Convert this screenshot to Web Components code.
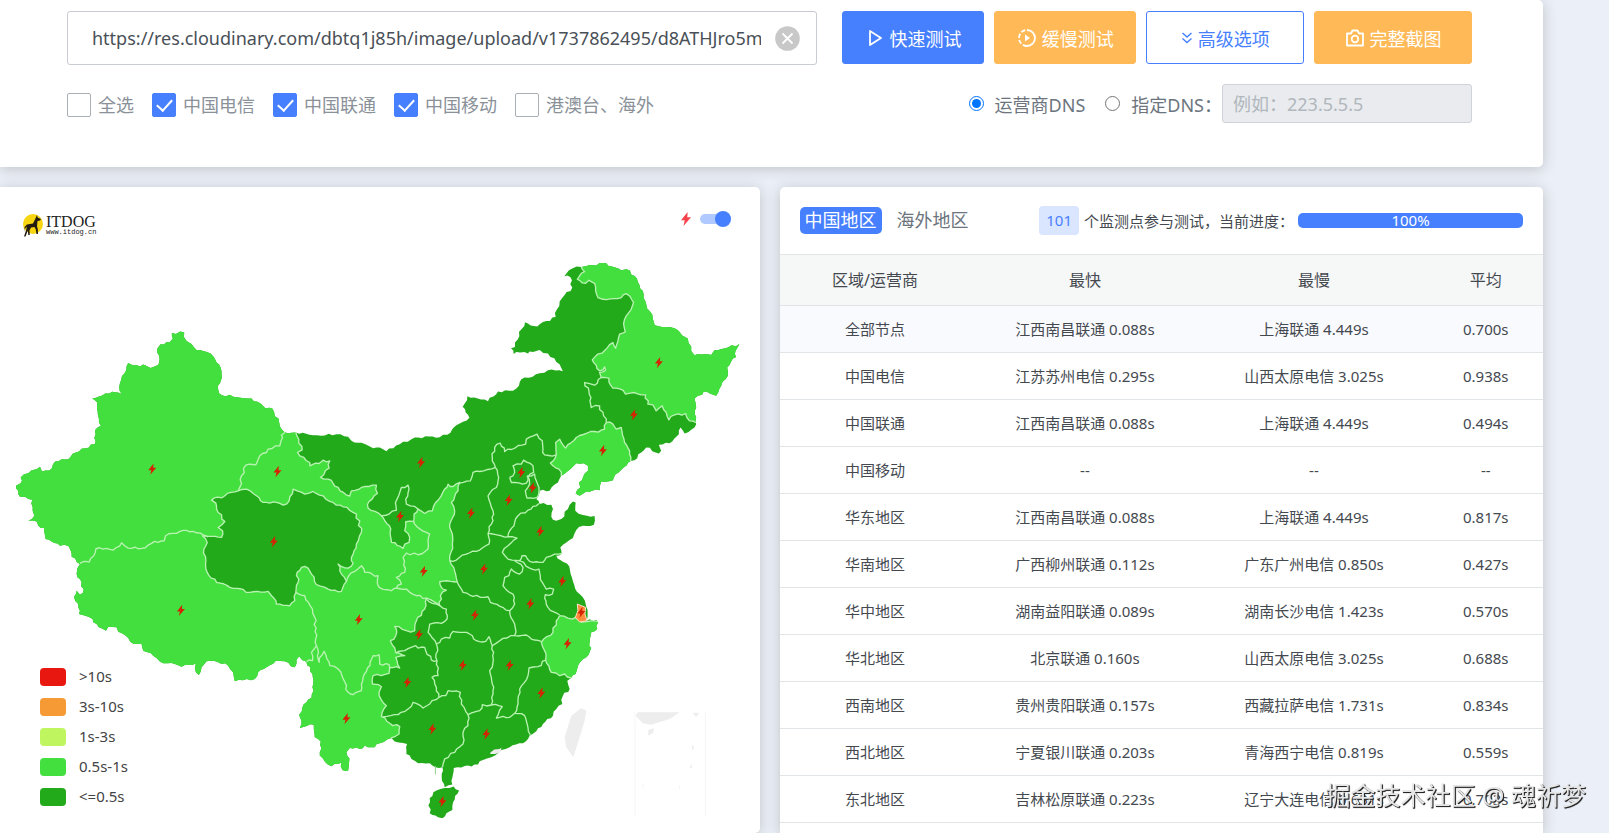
<!DOCTYPE html>
<html lang="zh-CN">
<head>
<meta charset="utf-8">
<title>ITDOG 网站测速</title>
<style>
html,body{margin:0;height:100%}
body{background:#ebeff7;color:#444950;overflow:hidden;font-family:"Noto Sans","Noto Sans CJK SC",sans-serif;font-size:15px}
</style>
</head>
<body>
<speed-page>
  <speed-form slot="form"></speed-form>
  <map-panel slot="map"></map-panel>
  <result-panel slot="results"></result-panel>
  <site-credit slot="credit">掘金技术社区 @ 魂祈梦</site-credit>
</speed-page>
<script>
function define(name, html, ready) {
  customElements.define(name, class extends HTMLElement {
    constructor() {
      super();
      this.attachShadow({mode: 'open'}).innerHTML = '<style>*{box-sizing:border-box}</style>' + html;
    }
    connectedCallback() { if (ready) ready.call(this, this.shadowRoot); }
  });
}

define('speed-page', `
<style>
:host{display:block;height:100vh;overflow:hidden}
main{width:calc(100% - 66px);min-height:100%;display:grid;grid-template-rows:auto 1fr;gap:20px}
.row{display:grid;grid-template-columns:calc(50% - 12px) minmax(0,1fr);gap:20px}
</style>
<main><slot name="form"></slot><div class="row"><slot name="map"></slot><slot name="results"></slot></div></main>
<slot name="credit"></slot>`);

define('surface-card', `
<style>:host{display:block;background:#fff;border-radius:0 5px 5px 0;box-shadow:0 2px 14px rgba(50,55,50,.24)}</style><slot></slot>`);

define('action-button', `
<style>
:host{display:block;flex:9 1 0}
:host([wide]){flex-grow:10}
button{width:100%;height:53px;border:1px solid #4680ff;border-radius:3px;background:#4680ff;color:#fff;font:inherit;font-size:18px;display:flex;align-items:center;justify-content:center;gap:5px;padding:0;white-space:nowrap}
:host([kind=warn]) button{background:#ffba57;border-color:#ffba57}
:host([kind=line]) button{background:#fff;color:#4680ff}
::slotted(svg){width:20px;height:20px;fill:none;stroke:currentColor;stroke-width:1.8}
:host([kind=line]) ::slotted(svg){width:12px}
</style>
<button type="button"><slot name="icon"></slot><slot></slot></button>`);

define('isp-option', `
<style>
:host{display:block}
label{display:flex;align-items:center;gap:7px;font-size:18px;line-height:24px;color:#8a9199;white-space:nowrap}
input{appearance:none;margin:0;width:24px;height:24px;border:1px solid #a9b0b6;border-radius:2px;background:#fff;display:grid;place-items:center}
input:checked{background:#4680ff;border-color:#4680ff}
input:checked::after{content:"";width:7px;height:13px;border:solid #fff;border-width:0 2px 2px 0;transform:translateY(-2px) rotate(42deg)}
</style>
<label><input type="checkbox"><span><slot></slot></span></label>`, function (root) {
  root.querySelector('input').checked = this.hasAttribute('checked');
});

define('speed-form', `
<style>
:host{display:block}
.grid{display:grid;grid-template-columns:25fr 21fr;column-gap:25px;padding:11px 71px 44px 67px}
.url{height:54px;border:1px solid #c8ccd0;border-radius:3px;display:flex;align-items:center;padding:0 16px 0 24px;gap:14px}
.url input{flex:1;min-width:0;border:0;outline:0;padding:0;background:none;font:inherit;font-size:18px;color:#495057}
.url button{border:0;padding:0;background:none;width:25px;height:25px}
.url svg{display:block}
.opts{display:flex;gap:18px;margin-top:28px}
.actions{display:flex;gap:10px}
.dns{display:flex;justify-content:flex-end;align-items:center;margin-top:20px;font-size:18px;color:#6c757d;white-space:nowrap}
.dns label{display:flex;align-items:center;gap:11px;margin-right:20px}
.dns label+label{margin-right:0}
.dns input[type=radio]{width:15px;height:15px;margin:0}
.dns input[type=text]{width:250px;height:39px;border:1px solid #ced4da;border-radius:3px;background:#e9ebee;font:inherit;font-size:18px;padding:0 10px}
.dns input::placeholder{color:#b0b7bd;opacity:1}
</style>
<surface-card><form class="grid">
<div>
  <div class="url"><input type="text" aria-label="网址" value="https://res.cloudinary.com/dbtq1j85h/image/upload/v1737862495/d8ATHJro5m"><button type="button" aria-label="清除"><svg viewBox="0 0 25 25"><circle cx="12.5" cy="12.5" r="12.3" fill="#c8c8c8"/><path d="M7.5 7.5l10 10M17.5 7.5l-10 10" stroke="#fff" stroke-width="1.8"/></svg></button></div>
  <div class="opts"><isp-option>全选</isp-option><isp-option checked>中国电信</isp-option><isp-option checked>中国联通</isp-option><isp-option checked>中国移动</isp-option><isp-option>港澳台、海外</isp-option></div>
</div>
<div>
  <div class="actions">
    <action-button><svg slot="icon" viewBox="0 0 20 20"><path d="M5 3v14l11-7z" stroke-linejoin="round"/></svg>快速测试</action-button>
    <action-button kind="warn"><svg slot="icon" viewBox="0 0 20 20"><path d="M10 2a8 8 0 0 1 0 16" /><path d="M10 18a8 8 0 0 1 0-16" stroke-dasharray="4.3 2"/><path d="M8 6.5v7l5-3.5z" fill="currentColor" stroke="none"/></svg>缓慢测试</action-button>
    <action-button kind="line" wide><svg slot="icon" viewBox="4 0 12 20" style="stroke-width:1.4"><path d="M5.5 5l4.500 4 4.500-4M5.500 10.500l4.500 4 4.500-4"/></svg>高级选项</action-button>
    <action-button kind="warn" wide><svg slot="icon" viewBox="0 0 20 20"><path d="M2 5.500h4l1.500-3h5l1.500 3h4v12H2z" stroke-linejoin="round"/><circle cx="10" cy="11" r="3.300"/></svg>完整截图</action-button>
  </div>
  <div class="dns"><label><input type="radio" name="dns" checked>运营商DNS</label><label><input type="radio" name="dns">指定DNS：</label><input type="text" aria-label="指定DNS地址" placeholder="例如：223.5.5.5" disabled></div>
</div>
</form></surface-card>`);

define('itdog-logo', `
<style>
:host{display:flex;align-items:center;gap:2px;color:#222}
svg{width:22px;height:24px}
b{display:block;font:16px/14px "Liberation Serif",serif}
small{display:block;font:7px/7px "Liberation Mono",monospace}
</style>
<svg viewBox="0 0 22 24"><circle cx="11" cy="11" r="10" fill="#f7d510"/><path fill="#231b10" d="M15 2l.6 2.600 3.400 1.400-.8 1.500-2.700.6-.5 5.400.8 2.500.2 5h-1.500l-.7-4.500-1.300-2.500-3.500.5-1.500 3 .3 4.500H6.300l-.5-4.500-2.300 6H2l2.300-7 .5-3-2 2.500-.5 3 .3-5L5 11.500l6-1 2-4z"/></svg>
<span><b>ITDOG</b><small>www.itdog.cn</small></span>`);

define('legend-item', `
<style>
:host{display:flex;align-items:center;gap:13px;height:18px;line-height:16px;color:#444}
i{width:26px;height:18px;border-radius:4px;background:var(--swatch)}
span{height:18px}
</style><i></i><span><slot></slot></span>`);

/* Map geometry, in thirds of a pixel at the design width. */
const LAND = '240,1690 215,1668 208,1640 205,1636 180,1635 155,1622 137,1615 133,1582 115,1575 110,1562 85,1560 103,1545 98,1530 97,1497 75,1488 60,1488 55,1470 48,1455 62,1447 62,1430 72,1420 95,1408 110,1405 120,1398 126,1412 148,1409 166,1382 205,1375 218,1359 284,1330 287,1302 285,1288 303,1275 293,1232 292,1205 277,1193 337,1173 366,1180 358,1158 385,1086 400,1094 440,1095 452,1101 475,1092 478,1084 473,1042 482,1030 510,1023 519,1013 516,996 553,995 552,1008 560,1020 575,1029 590,1047 610,1050 632,1058 642,1068 650,1085 662,1100 665,1120 663,1140 654,1155 658,1178 700,1188 755,1193 797,1222 818,1224 838,1264 855,1295 865,1297 888,1295 940,1303 1010,1300 1045,1308 1055,1320 1085,1326 1120,1342 1140,1340 1160,1351 1200,1330 1245,1310 1320,1309 1353,1295 1370,1273 1409,1251 1389,1218 1403,1186 1465,1201 1495,1172 1540,1170 1558,1155 1565,1135 1620,1117 1645,1108 1690,1111 1680,1090 1645,1058 1620,1047 1590,1052 1585,1058 1550,1053 1542,1059 1534,1042 1546,1038 1546,1025 1576,964 1613,977 1640,960 1668,948 1672,925 1695,882 1718,860 1712,828 1694,826 1718,803 1745,798 1770,792 1820,787 1865,808 1880,805 1905,825 1920,853 1932,880 1940,910 1950,930 1960,955 1965,972 2000,978 2025,982 2065,1013 2075,1050 2085,1063 2135,1062 2145,1048 2185,1040 2220,1029 2208,1050 2210,1068 2195,1082 2183,1100 2185,1125 2165,1155 2150,1185 2112,1173 2108,1182 2085,1193 2090,1220 2088,1260 2085,1280 2055,1298 2043,1280 2038,1300 2010,1327 1978,1332 1985,1350 1978,1358 1940,1340 1925,1355 1905,1378 1895,1380 1865,1407 1848,1420 1840,1438 1805,1442 1800,1468 1760,1472 1740,1485 1728,1478 1742,1460 1738,1445 1765,1410 1765,1395 1752,1387 1730,1387 1712,1405 1685,1425 1675,1445 1650,1470 1620,1470 1610,1495 1620,1510 1655,1512 1660,1525 1655,1548 1670,1560 1685,1555 1705,1525 1720,1502 1728,1505 1727,1530 1750,1543 1785,1546 1783,1572 1750,1575 1730,1588 1720,1612 1700,1625 1682,1640 1686,1658 1670,1665 1682,1678 1702,1688 1717,1730 1727,1765 1740,1780 1756,1800 1760,1818 1761,1860 1790,1857 1793,1885 1775,1895 1770,1925 1775,1942 1760,1970 1735,1995 1728,2020 1715,2032 1703,2040 1710,2065 1690,2085 1688,2110 1670,2125 1660,2145 1630,2170 1610,2192 1590,2205 1570,2228 1530,2240 1505,2248 1475,2270 1450,2278 1435,2292 1395,2296 1362,2302 1360,2320 1358,2352 1335,2360 1326,2330 1328,2300 1307,2300 1290,2288 1255,2288 1235,2275 1220,2260 1222,2230 1185,2223 1175,2212 1140,2228 1125,2240 1095,2235 1080,2245 1050,2242 1040,2255 1048,2285 1045,2310 1028,2308 1025,2285 995,2297 960,2265 963,2223 945,2210 942,2172 900,2182 905,2170 898,2142 908,2120 935,2092 940,2050 938,2020 920,1983 898,1967 885,2000 855,1982 828,1980 800,2000 775,2015 765,2035 705,2042 700,2015 685,1995 655,1985 620,1982 605,2000 597,2023 588,2015 588,1988 545,1998 515,1987 490,1988 460,1965 430,1950 425,1930 402,1930 385,1912 355,1893 350,1880 325,1878 318,1890 280,1865 270,1850 237,1840 235,1810 222,1788 230,1770 240,1782 250,1775 245,1745 230,1720 232,1703 240,1690';
const HAINAN = '1290,2392 1310,2370 1335,2362 1362,2358 1378,2370 1360,2405 1358,2428 1340,2438 1328,2453 1315,2450 1290,2438 1290,2392';
const LIGHT = [
  '888,1240 888,1296 907,1347 893,1355 930,1385 930,1395 958,1388 970,1378 990,1380 988,1402 962,1430 985,1435 1015,1460 1050,1486 1055,1470 1085,1460 1130,1453 1133,1478 1108,1502 1105,1522 1145,1545 1255,1525 1275,1538 1298,1530 1302,1515 1335,1465 1345,1450 1360,1457 1380,1445 1375,1470 1355,1505 1365,1530 1350,1570 1358,1630 1350,1678 1362,1700 1373,1744 1320,1743 1325,1760 1340,1768 1322,1785 1320,1815 1280,1792 1275,1825 1250,1860 1245,1890 1220,1890 1185,1877 1188,1905 1172,1920 1188,1955 1215,1965 1188,1970 1200,2002 1170,2000 1168,2018 1120,2025 1118,2050 1145,2058 1138,2085 1160,2115 1145,2148 1170,2168 1200,2178 1198,2200 1175,2212 1150,2380 0,2380 0,900 888,900 888,1240',
  '1735,750 1745,798 1755,812 1733,835 1758,847 1768,838 1785,847 1795,890 1810,895 1865,890 1880,878 1902,905 1875,955 1877,993 1860,1000 1848,1042 1840,1025 1778,1077 1800,1110 1815,1098 1818,1108 1800,1115 1805,1130 1828,1132 1840,1162 1870,1168 1878,1180 1905,1175 1938,1182 1945,1210 1960,1212 1970,1230 1988,1215 2008,1257 2025,1242 2058,1238 2070,1260 2090,1265 2290,1265 2290,750 1735,750',
  '1820,1265 1840,1270 1850,1285 1865,1280 1875,1325 1890,1350 1893,1380 1900,1491 1700,1491 1685,1425 1678,1405 1652,1387 1670,1360 1668,1325 1680,1315 1698,1342 1730,1310 1785,1292 1815,1285 1820,1265',
  '1680,1845 1705,1852 1718,1855 1728,1850 1745,1864 1900,1850 1900,2032 1715,2032 1695,2020 1680,2025 1655,2015 1638,1978 1635,1950 1625,1925 1660,1895 1670,1860 1680,1845'
];
const DARK = [
  '625,1607 665,1610 668,1590 655,1580 675,1562 650,1525 648,1507 635,1498 715,1470 740,1465 770,1485 790,1505 830,1505 850,1513 868,1500 880,1465 915,1480 940,1472 970,1485 990,1502 1030,1518 1070,1540 1085,1595 1070,1630 1055,1670 1060,1688 1045,1702 1015,1690 1025,1720 1040,1742 1025,1772 985,1765 950,1752 935,1720 925,1702 905,1700 892,1715 895,1745 888,1775 885,1800 870,1815 830,1810 815,1785 805,1772 750,1775 700,1763 650,1745 622,1715 618,1680 612,1645 622,1625 608,1605 625,1607',
  '1145,1545 1190,1528 1192,1495 1205,1460 1225,1453 1228,1465 1218,1495 1220,1510 1255,1525 1243,1540 1242,1562 1218,1563 1215,1590 1230,1610 1228,1625 1215,1630 1210,1643 1175,1625 1173,1585 1155,1560 1145,1545'
];
const LINES = [
  '240,1688 268,1684 288,1644 340,1648 365,1626 385,1642 425,1643 455,1628 493,1620 497,1605 540,1592 580,1592 610,1602 625,1608',
  '715,1470 738,1393 768,1392 775,1375 805,1345 840,1335 848,1310 845,1303 857,1290',
  '888,1775 915,1785 938,1825 945,1850 950,1935 935,1955 938,1980 920,1983',
  '950,1935 958,1985 973,1952 990,1995 1015,2005 1045,2075 1060,2082 1085,2070 1090,2030 1120,1965 1138,1962 1140,1990 1168,1992 1170,2005',
  '1040,1742 1045,1728 1065,1712 1085,1695 1095,1715 1135,1725 1138,1760 1175,1770 1190,1762 1220,1765 1250,1785 1280,1792',
  '1190,1762 1205,1750 1190,1730 1215,1715 1210,1670 1220,1657 1255,1662 1285,1645 1290,1600 1245,1570 1240,1560',
  '1805,1130 1785,1153 1770,1148 1755,1145 1768,1170 1775,1220 1800,1215 1812,1245 1820,1265',
  '1670,1362 1635,1362 1630,1345 1628,1320 1612,1300 1580,1315 1578,1330 1515,1352 1502,1327 1485,1340 1478,1370 1487,1400 1440,1412 1420,1415 1412,1440 1380,1447',
  '1487,1400 1497,1430 1490,1460 1465,1485 1480,1530 1475,1570 1465,1598 1468,1630 1440,1648 1400,1660 1370,1678 1350,1680',
  '1465,1598 1525,1608 1530,1590 1545,1565 1555,1545 1585,1528 1610,1515 1618,1508',
  '1525,1608 1552,1612 1525,1635 1508,1655 1525,1675 1560,1680 1567,1665 1578,1665 1590,1682 1630,1685 1640,1670 1665,1660 1688,1658',
  '1560,1680 1590,1702 1618,1705 1628,1745 1640,1765 1662,1765 1658,1780 1637,1782 1645,1820 1680,1843',
  '1545,1680 1570,1700 1560,1720 1535,1705 1528,1725 1515,1730 1510,1755 1540,1780 1545,1810 1530,1830',
  '1373,1745 1390,1775 1420,1787 1465,1788 1472,1805 1530,1830 1545,1870 1545,1905 1580,1903 1595,1915 1625,1922',
  '1638,1978 1615,1998 1588,2002 1585,2025 1560,2065 1555,2110 1545,2138 1575,2145 1585,2180 1592,2215',
  '1545,2138 1530,2150 1490,2152 1508,2118 1475,2113 1448,2112 1440,2130 1405,2142 1385,2110 1382,2075 1345,2070 1338,2085 1318,2090',
  '1405,2142 1405,2175 1390,2195 1390,2230 1365,2255 1335,2275 1328,2300',
  '1318,2090 1290,2110 1270,2122 1240,2105 1225,2125 1195,2142 1150,2148',
  '1318,2090 1310,2060 1297,2030 1315,2025 1312,1980 1310,1930 1325,1915 1350,1912 1360,1892 1410,1900 1430,1920 1458,1922 1468,1908 1478,1935 1500,1920 1545,1905',
  '1280,1795 1310,1810 1340,1825 1342,1855 1325,1868 1290,1870 1285,1895 1310,1930',
  '1478,1935 1480,1985 1470,2010 1478,2050 1480,2080 1475,2113',
  '1188,1958 1215,1950 1248,1935 1255,1942 1275,1940 1295,1978 1312,1980',
  '1530,1430 1545,1415 1540,1395 1565,1390 1572,1378 1600,1395 1602,1415 1585,1430 1580,1447 1535,1445 1530,1430',
  '1582,1425 1605,1420 1610,1440 1618,1460 1612,1490 1582,1492 1577,1470 1590,1450 1582,1425'
];
const BOLTS = '457,1405 833,1412 822,1623 1264,1385 1201,1547 1414,1537 1527,1498 1565,1415 1599,1461 1622,1592 1453,1705 1592,1809 1426,1843 1272,1712 1077,1857 1258,1902 1978,1085 1903,1242 1810,1349 543,1829 1040,2154 1223,2045 1389,1994 1530,1994 1625,2077 1704,1929 1745,1835 1688,1742 1298,2185 1460,2200 1328,2403';

/* Splits long segments and nudges each new vertex, so borders read as natural outlines. */
function outline(list) {
  const p = list.split(' ').map(s => s.split(',').map(Number));
  const out = [p[0]];
  for (let i = 1; i < p.length; i++) {
    const [ax, ay] = p[i - 1], [bx, by] = p[i];
    const len = Math.hypot(bx - ax, by - ay), n = Math.max(1, Math.min(9, Math.round(len / 11)));
    for (let k = 1; k < n; k++) {
      const x = ax + (bx - ax) * k / n, y = ay + (by - ay) * k / n;
      const h = Math.sin(x * 12.9898 + y * 78.233) * 43758.5453;
      const j = (h - Math.floor(h) - .5) * 8;
      out.push([x - (by - ay) / len * j, y + (bx - ax) / len * j]);
    }
    out.push(p[i]);
  }
  return 'M' + out.map(a => a.map(v => Math.round(v)).join(' ')).join('L');
}
const BOLT = 'M4-17L-12 3H-3L-6 17 12-4H3z';

define('china-map', `
<style>
:host{display:block}
svg{display:block;width:100%;height:auto}
.lines path{fill:none}
.edge{stroke:#b9f3b2;stroke-width:4;stroke-linejoin:round}
</style>
<svg viewBox="0 558 2280 1938" role="img" aria-label="中国各省测速地图">
<defs><clipPath id="land"><path/></clipPath></defs>
<g clip-path="url(#land)" class="edge">
<rect x="0" y="700" width="2280" height="1800" fill="#23aa1b" stroke="none"/>
<g class="light" fill="#43df3f"></g><g class="dark" fill="#23aa1b"></g><g class="lines"></g>
</g>
<path d="M1733 1810l25 10-2 20 6 20-22 4-13-14 8-20z" fill="#ff8b3d" stroke="#ffe0c8" stroke-width="3"/>
<path d="M1307 2296v25" stroke="#8bcf86" stroke-width="3"/>
<path d="M1745 2122l15 8-5 30-15 50-19 60-21-30-5-30 20-65zM1472 2256l12-9 16-2 5-4-2 14-17 5-14 0z" fill="#ededed"/>
<path d="M1908 2145l7-10h125l-30 20-55 17-25-4zM1946 2188l17-5-3 14-14 8zM2080 2136h18l-8 14zM2077 2235h5v12h-5zM2070 2300l8-12-2 16z" fill="#ededed"/>
<path d="M1906 2135v313M2118 2135v313M1930 2350v14M2040 2355v10" stroke="#f6f6f6" stroke-width="3"/>
<g class="bolts" fill="#d42405"></g>
</svg>`, function (root) {
  const paths = a => a.map(s => `<path d="${outline(s)}"/>`).join('');
  root.querySelector('#land path').setAttribute('d', outline(LAND) + 'Z' + outline(HAINAN) + 'Z');
  root.querySelector('.light').innerHTML = paths(LIGHT);
  root.querySelector('.dark').innerHTML = paths(DARK);
  root.querySelector('.lines').innerHTML = paths(LINES);
  root.querySelector('.bolts').innerHTML = BOLTS.split(' ').map(p => `<path transform="translate(${p})" d="${BOLT}"/>`).join('');
});

define('map-panel', `
<style>
:host{display:block}
surface-card{height:100%;position:relative}
itdog-logo{position:absolute;left:22px;top:26px}
.mode{position:absolute;right:29px;top:24px;display:flex;align-items:center;gap:9px}
.mode svg{width:10px;height:16px}
.mode input{appearance:none;margin:0;width:31px;height:10px;border-radius:5px;background:#b0c9ff;display:flex;align-items:center;justify-content:flex-end}
.mode input::after{content:"";width:16px;height:16px;border-radius:50%;background:#4680ff}
.legend{position:absolute;left:40px;top:481px;display:grid;gap:12px}
</style>
<surface-card>
<china-map></china-map>
<itdog-logo></itdog-logo>
<label class="mode"><svg viewBox="-12 -17 24 34"><path d="${BOLT}" fill="#f5424b"/></svg><input type="checkbox" checked aria-label="显示标记"></label>
<div class="legend">
<legend-item style="--swatch:#e8170f">&gt;10s</legend-item>
<legend-item style="--swatch:#f59a35">3s-10s</legend-item>
<legend-item style="--swatch:#bff65f">1s-3s</legend-item>
<legend-item style="--swatch:#43df3f">0.5s-1s</legend-item>
<legend-item style="--swatch:#23aa1b">&lt;=0.5s</legend-item>
</div>
</surface-card>`);

const ROWS = [
  ['全部节点', '江西南昌联通 0.088s', '上海联通 4.449s', '0.700s'],
  ['中国电信', '江苏苏州电信 0.295s', '山西太原电信 3.025s', '0.938s'],
  ['中国联通', '江西南昌联通 0.088s', '上海联通 4.449s', '0.494s'],
  ['中国移动', '--', '--', '--'],
  ['华东地区', '江西南昌联通 0.088s', '上海联通 4.449s', '0.817s'],
  ['华南地区', '广西柳州联通 0.112s', '广东广州电信 0.850s', '0.427s'],
  ['华中地区', '湖南益阳联通 0.089s', '湖南长沙电信 1.423s', '0.570s'],
  ['华北地区', '北京联通 0.160s', '山西太原电信 3.025s', '0.688s'],
  ['西南地区', '贵州贵阳联通 0.157s', '西藏拉萨电信 1.731s', '0.834s'],
  ['西北地区', '宁夏银川联通 0.203s', '青海西宁电信 0.819s', '0.559s'],
  ['东北地区', '吉林松原联通 0.223s', '辽宁大连电信 0.631s', '0.703s']
];
define('result-panel', `
<style>
:host{display:block}
surface-card{height:100%;border-radius:5px 5px 0 0}
header{height:67px;padding:0 20px;display:flex;align-items:center;white-space:nowrap}
nav{display:flex;gap:10px;margin-right:auto}
nav a{font-size:18px;line-height:27px;padding:0 5px;border-radius:5px;color:#6c757d;text-decoration:none}
nav a[aria-current]{background:#4680ff;color:#fff}
.count{background:#dae6ff;color:#4680ff;border-radius:4px;line-height:29px;padding:0 7px;margin-right:5px}
.bar{width:225px;height:15px;border-radius:5px;background:#4680ff;color:#fff;line-height:15px;text-align:center;margin-left:4px}
table{width:100%;height:569px;border-collapse:collapse;table-layout:fixed;text-align:center}
th,td{border-top:1px solid #e2e5e8;padding:12px 0;line-height:21px;white-space:nowrap}
tbody tr:last-child td{border-bottom:1px solid #e2e5e8}
thead tr{height:51px}
th{font-weight:400;font-size:16px;background:#f6f7f7}
tbody tr:first-child{background:#f9fafe}
th:nth-child(1){width:25%}th:nth-child(2),th:nth-child(3){width:30%}
</style>
<surface-card>
<header><nav><a href="#cn" aria-current="page">中国地区</a><a href="#sea">海外地区</a></nav><span class="count">101</span><span>个监测点参与测试，当前进度：</span><div class="bar" role="progressbar" aria-valuenow="100">100%</div></header>
<table><thead><tr><th>区域/运营商</th><th>最快</th><th>最慢</th><th>平均</th></tr></thead><tbody></tbody></table>
</surface-card>`, function (root) {
  root.querySelector('tbody').innerHTML = ROWS.map(r => '<tr>' + r.map(c => `<td>${c}</td>`).join('') + '</tr>').join('');
});

define('site-credit', `
<style>
:host{position:fixed;right:23px;bottom:19px;font-size:25px;line-height:38px;color:#e6e6e6;text-shadow:1px 1px 1px #222,1px 1px 0 #444;white-space:nowrap}
</style><slot></slot>`);
</script>
</body>
</html>
